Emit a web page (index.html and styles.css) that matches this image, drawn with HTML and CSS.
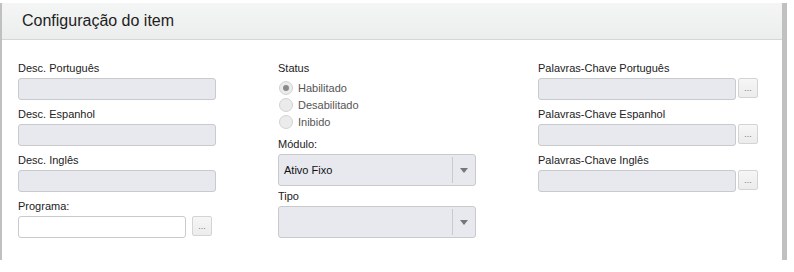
FILE: index.html
```html
<!DOCTYPE html>
<html lang="pt-BR">
<head>
    <meta charset="UTF-8">
    <title>Configuração do item</title>
    <link rel="stylesheet" href="styles.css">
</head>
<body>
    <div class="panel">
        <div class="panel-header">Configuração do item</div>
        <div class="panel-body">
            <div class="col">
                <label class="field-label">Desc. Português</label>
                <div class="input disabled"></div>
                <label class="field-label">Desc. Espanhol</label>
                <div class="input disabled"></div>
                <label class="field-label">Desc. Inglês</label>
                <div class="input disabled"></div>
                <label class="field-label">Programa:</label>
                <div class="input-row wide-gap">
                    <div class="input short"></div>
                    <div class="btn-more">...</div>
                </div>
            </div>
            <div class="col">
                <label class="field-label">Status</label>
                <div class="radios">
                    <div class="radio checked"><span class="dot"></span>Habilitado</div>
                    <div class="radio"><span class="dot"></span>Desabilitado</div>
                    <div class="radio"><span class="dot"></span>Inibido</div>
                </div>
                <label class="field-label">Módulo:</label>
                <div class="select">
                    <span class="select-value">Ativo Fixo</span>
                    <span class="select-arrow"></span>
                </div>
                <label class="field-label">Tipo</label>
                <div class="select">
                    <span class="select-value"></span>
                    <span class="select-arrow"></span>
                </div>
            </div>
            <div class="col">
                <label class="field-label">Palavras-Chave Português</label>
                <div class="input-row">
                    <div class="input disabled"></div>
                    <div class="btn-more">...</div>
                </div>
                <label class="field-label">Palavras-Chave Espanhol</label>
                <div class="input-row">
                    <div class="input disabled"></div>
                    <div class="btn-more">...</div>
                </div>
                <label class="field-label">Palavras-Chave Inglês</label>
                <div class="input-row">
                    <div class="input disabled"></div>
                    <div class="btn-more">...</div>
                </div>
            </div>
        </div>
    </div>
</body>
</html>
```

FILE: styles.css
```css
body {
    margin: 0;
    background: #fff;
    font-family: "Liberation Sans", Arial, sans-serif;
    color: #222;
}
.panel {
    margin-top: 3px;
    width: 780px;
    height: 257px;
    border-left: 2px solid #c0c0c0;
    border-right: 5px solid #c0c0c0;
}
.panel-header {
    height: 36px;
    line-height: 36px;
    padding-left: 20px;
    font-size: 16px;
    color: #1e1e1e;
    background: linear-gradient(#f4f5f5, #eceded);
    border-bottom: 1px solid #d3d5d7;
}
.panel-body {
    display: grid;
    grid-template-columns: 260px 260px 260px;
    padding: 22px 0 0 16px;
}
.col {
    display: flex;
    flex-direction: column;
    align-items: flex-start;
}
.field-label {
    font-size: 11px;
    line-height: 13px;
    color: #222;
    margin-bottom: 3px;
}
.input {
    width: 196px;
    height: 20px;
    border: 1px solid #c9cacc;
    border-radius: 3px;
    background: #fff;
    margin-bottom: 8px;
}
.input.disabled {
    background: #e7e9ef;
}
.input.short {
    width: 166px;
}
.input-row {
    display: flex;
    align-items: flex-start;
    gap: 2px;
}
.input-row.wide-gap {
    gap: 6px;
}
.btn-more {
    width: 18px;
    height: 18px;
    border: 1px solid #d4d4d4;
    border-radius: 2px;
    background: linear-gradient(#f6f6f6, #ececec);
    color: #777;
    font-size: 9px;
    line-height: 18px;
    text-align: center;
}
.radios {
    margin-top: 1px;
    margin-bottom: 8px;
}
.radio {
    display: flex;
    align-items: center;
    height: 17px;
    font-size: 11px;
    color: #555;
}
.dot {
    width: 12px;
    height: 12px;
    border: 1px solid #d2d2d2;
    border-radius: 50%;
    background: #ebebeb;
    margin-right: 5px;
    margin-left: 1px;
    display: flex;
    align-items: center;
    justify-content: center;
}
.radio.checked .dot::after {
    content: "";
    width: 6px;
    height: 6px;
    border-radius: 50%;
    background: #8a8a8a;
}
.select {
    display: flex;
    align-items: center;
    width: 196px;
    height: 30px;
    border: 1px solid #c9cacc;
    border-radius: 3px;
    background: #e7e9ef;
    margin-bottom: 4px;
}
.select-value {
    flex: 1;
    padding-left: 5px;
    font-size: 11px;
    color: #111;
}
.select-arrow {
    width: 22px;
    height: 26px;
    border-left: 1px solid #c9cacc;
    display: flex;
    align-items: center;
    justify-content: center;
}
.select-arrow::after {
    content: "";
    border-left: 4px solid transparent;
    border-right: 4px solid transparent;
    border-top: 5px solid #777;
}
```
